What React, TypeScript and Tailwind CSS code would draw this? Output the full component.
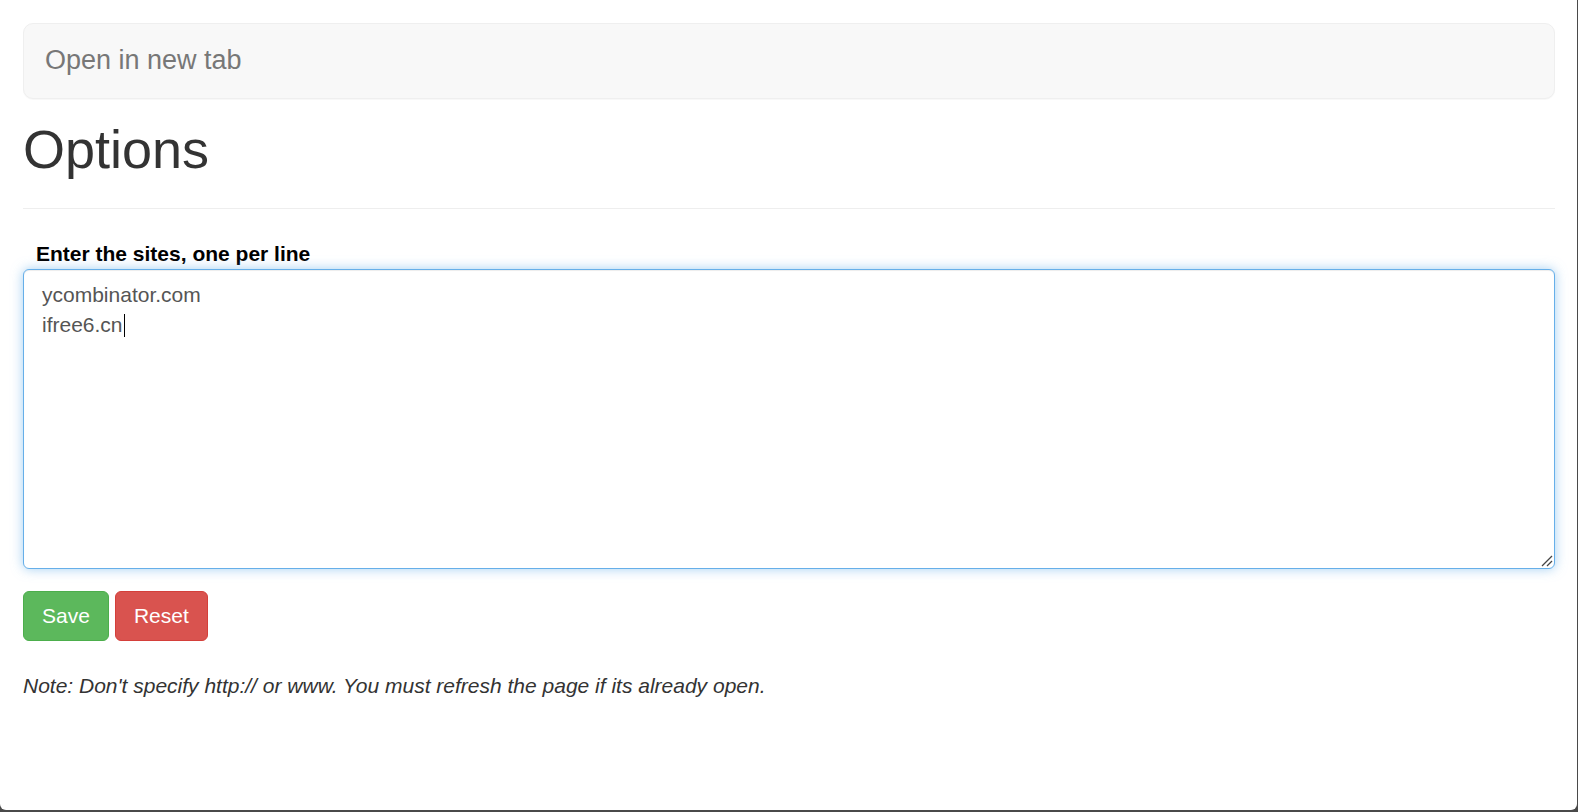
import React from 'react'

const font = { fontFamily: '"Liberation Sans", Arial, Helvetica, sans-serif' }

function ResizeGrip() {
  return (
    <svg
      className="absolute bottom-[1px] right-[1px]"
      width="13"
      height="13"
      viewBox="0 0 13 13"
      fill="none"
    >
      <path d="M12 2 L2 12" stroke="#444" strokeWidth="1.3" />
      <path d="M12 7 L7 12" stroke="#444" strokeWidth="1.3" />
    </svg>
  )
}

export default function App() {
  return (
    <div className="h-[812px] w-full bg-[#4a4a4a]" style={font}>
      <div className="h-[810px] w-[1577px] overflow-hidden rounded-b-[6px] bg-white pl-[23px] pr-[22px] pt-[23px]">
        {/* navbar */}
        <div className="flex h-[76px] items-center rounded-[10px] border border-[#efefef] bg-[#f8f8f8] px-[21px] pb-[3px] shadow-[0_1px_1px_rgba(0,0,0,0.03)]">
          <span className="text-[27px] leading-[30px] text-[#777777]">
            Open in new tab
          </span>
        </div>

        {/* page header */}
        <div className="border-b border-[#eeeeee] pb-[29px]">
          <h1 className="mt-[21px] text-[54px] font-normal leading-[59px] text-[#333333]">
            Options
          </h1>
        </div>

        {/* form */}
        <label className="ml-[13px] mt-[30px] block text-[21px] font-bold leading-[30px] text-black">
          Enter the sites, one per line
        </label>
        <div className="relative h-[300px] rounded-[6px] border border-[#66afe9] bg-white px-[18px] pt-[10px] text-[21px] leading-[30px] text-[#555555] shadow-[inset_0_1px_1px_rgba(0,0,0,0.075),0_0_12px_rgba(102,175,233,0.6)]">
          <div>ycombinator.com</div>
          <div className="flex items-center">
            ifree6.cn
            <span className="ml-[1px] inline-block h-[23px] w-px bg-black" />
          </div>
          <ResizeGrip />
        </div>

        <div className="mt-[22px] flex gap-[6px]">
          <button
            type="button"
            className="h-[50px] rounded-[6px] border border-[#4cae4c] bg-[#5cb85c] px-[18px] text-[21px] leading-[30px] text-white"
          >
            Save
          </button>
          <button
            type="button"
            className="h-[50px] rounded-[6px] border border-[#d43f3a] bg-[#d9534f] px-[18px] text-[21px] leading-[30px] text-white"
          >
            Reset
          </button>
        </div>

        <p className="mt-[30px] text-[21px] italic leading-[30px] text-[#333333]">
          Note: Don't specify http:// or www. You must refresh the page if its
          already open.
        </p>
      </div>
    </div>
  )
}
